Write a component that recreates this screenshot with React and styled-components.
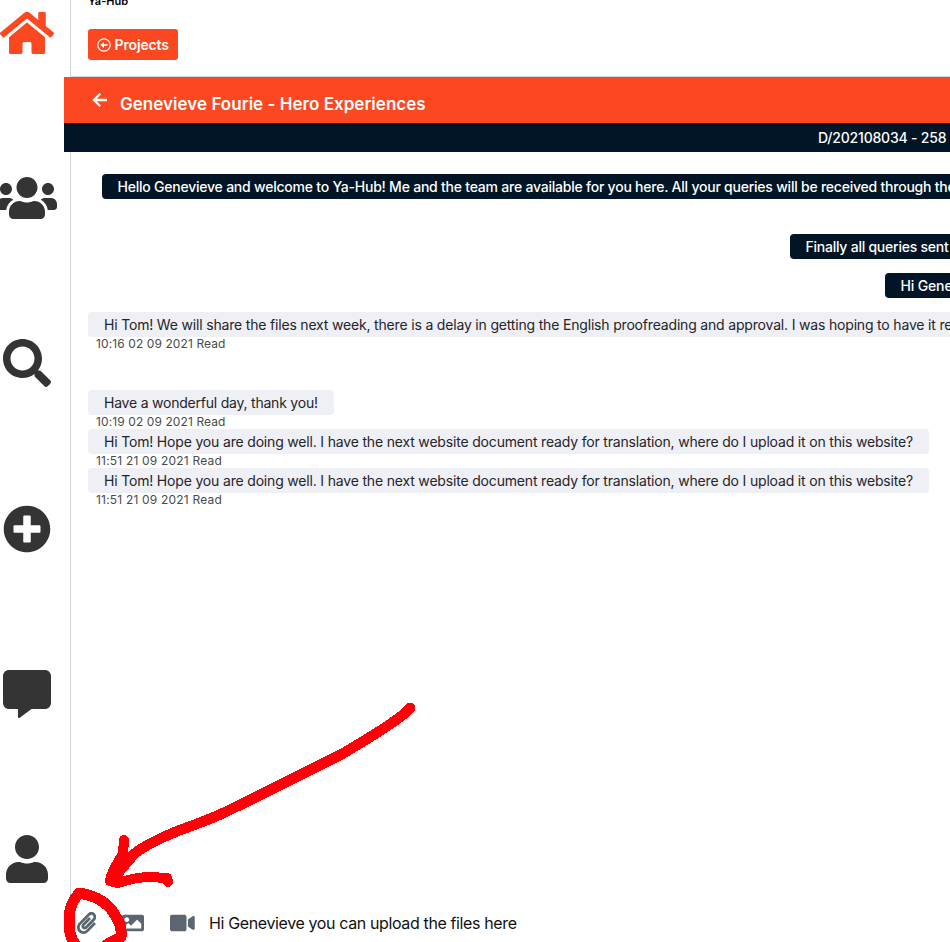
import React from "react";
import styled, { createGlobalStyle } from "styled-components";
import { FaHome, FaUsers, FaSearch, FaPlusCircle, FaCommentAlt, FaUser, FaPaperclip, FaImage, FaVideo } from "react-icons/fa";

const GlobalStyle = createGlobalStyle`
  * { box-sizing: border-box; }
  body { margin: 0; background: #fff; overflow: hidden; font-family: Inter, "Liberation Sans", sans-serif; color: #212529; }
  svg { display: block; flex: none; }
`;

const Page = styled.div`
  position: relative;
  display: flex;
  width: 950px;
  height: 942px;
  overflow: hidden;
`;

const Sidebar = styled.nav`
  flex: none;
  width: 64px;
  padding: 9px 10px 59px 0;
  display: flex;
  flex-direction: column;
  align-items: center;
  justify-content: space-between;
`;

const SideItem = styled.a`
  display: flex;
  justify-content: center;
  width: 54px;
  height: 48px;
  color: ${(p) => (p.$active ? "#fb4820" : "#343434")};

  svg {
    width: ${(p) => p.$iconWidth}px;
    height: 48px;
  }
`;

const Content = styled.main`
  flex: 1;
  min-width: 0;
  display: flex;
  flex-direction: column;
`;

const TopBar = styled.header`
  height: 77px;
  margin-left: 6px;
  padding-left: 17px;
  border-left: 1px solid #d0d7dc;
  border-bottom: 1px solid #d0d7dc;
`;

const Brand = styled.div`
  margin-top: -7px;
  height: 36px;
  font-size: 11px;
  line-height: 16px;
  font-weight: 600;
  color: #000;
`;

const ProjectsButton = styled.button`
  display: flex;
  align-items: center;
  gap: 3.5px;
  width: 90px;
  height: 31px;
  padding: 0 0 0 9px;
  border: 0;
  border-radius: 3px;
  background: #fb4820;
  color: #fff;
  font: 600 14px/21px Inter, sans-serif;
  letter-spacing: -0.13px;
`;

const ChatHeader = styled.div`
  flex: none;
  height: 46px;
  padding: 4px 0 0 28px;
  display: flex;
  align-items: center;
  background: #fb4820;
  color: #fff;
`;

const BackIcon = styled.span`
  margin: -5px 12px 0 0;
`;

const ChatTitle = styled.h1`
  margin: 3px 0 0;
  font-size: 17px;
  line-height: 24px;
  font-weight: 600;
  letter-spacing: 0.03px;
`;

const ProjectBar = styled.div`
  flex: none;
  height: 29px;
  padding-left: 754px;
  background: #021526;
  color: #fff;
  font-size: 14px;
  line-height: 30px;
  font-weight: 500;
  white-space: nowrap;
  letter-spacing: -0.2px;
`;

const Messages = styled.section`
  flex: 1;
  margin-left: 6px;
  padding: 22px 0 0 17px;
  border-left: 1px solid #d0d7dc;
`;

const Message = styled.div`
  margin: 0 0 ${(p) => p.$after || 0}px ${(p) => p.$indent || 0}px;
`;

const Bubble = styled.div`
  width: ${(p) => (p.$width ? `${p.$width}px` : "1200px")};
  height: 25px;
  padding-left: ${(p) => (p.$sent ? 15.5 : 16)}px;
  border-radius: 4px;
  background: ${(p) => (p.$sent ? "#021526" : "#efeff6")};
  color: ${(p) => (p.$sent ? "#fff" : "#252528")};
  font-size: 14px;
  font-weight: ${(p) => (p.$sent ? 500 : 400)};
  line-height: 26px;
  white-space: nowrap;
  letter-spacing: ${(p) => p.$track}px;
`;

const Stamp = styled.div`
  height: 14px;
  padding-left: 8px;
  font-size: 12px;
  line-height: 14px;
  color: #4b4b4b;
  letter-spacing: ${(p) => p.$track}px;
`;

const Composer = styled.footer`
  flex: none;
  height: 38px;
  padding: 0 0 0 13px;
  display: flex;
  align-items: center;
  color: #5b6670;
`;

const Tool = styled.span`
  width: ${(p) => p.$width}px;

  svg {
    width: ${(p) => p.$iconWidth}px;
    height: 22px;
  }
`;

const Draft = styled.span`
  color: #111;
  font-size: 16px;
  letter-spacing: -0.375px;
`;

const Annotation = styled.svg`
  position: absolute;
  inset: 0;
  pointer-events: none;
`;

const navItems = [
  { Icon: FaHome, width: 54 },
  { Icon: FaUsers, width: 60 },
  { Icon: FaSearch, width: 48 },
  { Icon: FaPlusCircle, width: 48 },
  { Icon: FaCommentAlt, width: 48 },
  { Icon: FaUser, width: 42 },
];

const question = "Hi Tom! Hope you are doing well. I have the next website document ready for translation, where do I upload it on this website?";

const messages = [
  { sent: true, indent: 14, after: 35, text: "Hello Genevieve and welcome to Ya-Hub! Me and the team are available for you here. All your queries will be received through the", track: -0.225 },
  { sent: true, indent: 702, after: 14, text: "Finally all queries sent", track: -0.24 },
  { sent: true, indent: 797, after: 14, text: "Hi Gene", track: -0.15 },
  { text: "Hi Tom! We will share the files next week, there is a delay in getting the English proofreading and approval. I was hoping to have it re", time: "10:16 02 09 2021 Read", after: 39, track: -0.18, stampTrack: 0.1 },
  { text: "Have a wonderful day, thank you!", time: "10:19 02 09 2021 Read", width: 246, track: -0.22, stampTrack: 0.1 },
  { text: question, time: "11:51 21 09 2021 Read", width: 841, track: -0.178, stampTrack: 0.19 },
  { text: question, time: "11:51 21 09 2021 Read", width: 841, track: -0.178, stampTrack: 0.19 },
];

export default function App() {
  return (
    <Page>
      <GlobalStyle />
      <Sidebar>
        {navItems.map(({ Icon, width }, i) => (
          <SideItem key={i} $active={i === 0} $iconWidth={width}>
            <Icon />
          </SideItem>
        ))}
      </Sidebar>
      <Content>
        <TopBar>
          <Brand>Ya-Hub</Brand>
          <ProjectsButton>
            <svg width="14" height="14" viewBox="0 0 14 14" fill="none" stroke="currentColor" strokeWidth="1.2">
              <circle cx="7" cy="7" r="6.2" />
              <path d="M10.5 7H4.5" strokeWidth="1.6" />
              <path d="M3.4 7L7 4.1V9.9Z" fill="currentColor" stroke="none" />
            </svg>
            Projects
          </ProjectsButton>
        </TopBar>
        <ChatHeader>
          <BackIcon>
            <svg width="16" height="16" viewBox="0 0 16 16" fill="none" stroke="currentColor" strokeWidth="2.3">
              <path d="M15 8H2.5M8.2 1.8 2 8l6.2 6.2" />
            </svg>
          </BackIcon>
          <ChatTitle>Genevieve Fourie - Hero Experiences</ChatTitle>
        </ChatHeader>
        <ProjectBar>D/202108034 - 258</ProjectBar>
        <Messages>
          {messages.map((m, i) => (
            <Message key={i} $indent={m.indent} $after={m.after}>
              <Bubble $sent={m.sent} $width={m.width} $track={m.track}>{m.text}</Bubble>
              {m.time && <Stamp $track={m.stampTrack}>{m.time}</Stamp>}
            </Message>
          ))}
        </Messages>
        <Composer>
          <Tool $width={45} $iconWidth={19.25}><FaPaperclip /></Tool>
          <Tool $width={48} $iconWidth={22}><FaImage /></Tool>
          <Tool $width={39} $iconWidth={24.75}><FaVideo /></Tool>
          <Draft>Hi Genevieve you can upload the files here</Draft>
        </Composer>
      </Content>
      <Annotation width="950" height="942" viewBox="0 0 950 942" fill="none" stroke="#ff0008" strokeWidth="10" strokeLinecap="round" strokeLinejoin="round" shapeRendering="crispEdges">
        <path d="M410 708L405 713C390 726 364 741 342 754L320 765L250 800C228 811 212 819 180 830C160 838 143 847 134 854L118 873" strokeWidth="10.5" />
        <path d="M124 840L123 853C119 862 111 871 110 881L118 883C130 879 140 877 150 877L167 878L168 882" />
        <path d="M125 854L111 870L110 882L118 883L122 872L132 858Z" fill="#ff0008" strokeWidth="4" />
        <path d="M76 945C70 939 69 931 69 922C69 910 71 903 79 893C93 895 104 901 111 909C120 922 122 927 121 937L106 945" strokeWidth="11" />
      </Annotation>
    </Page>
  );
}
